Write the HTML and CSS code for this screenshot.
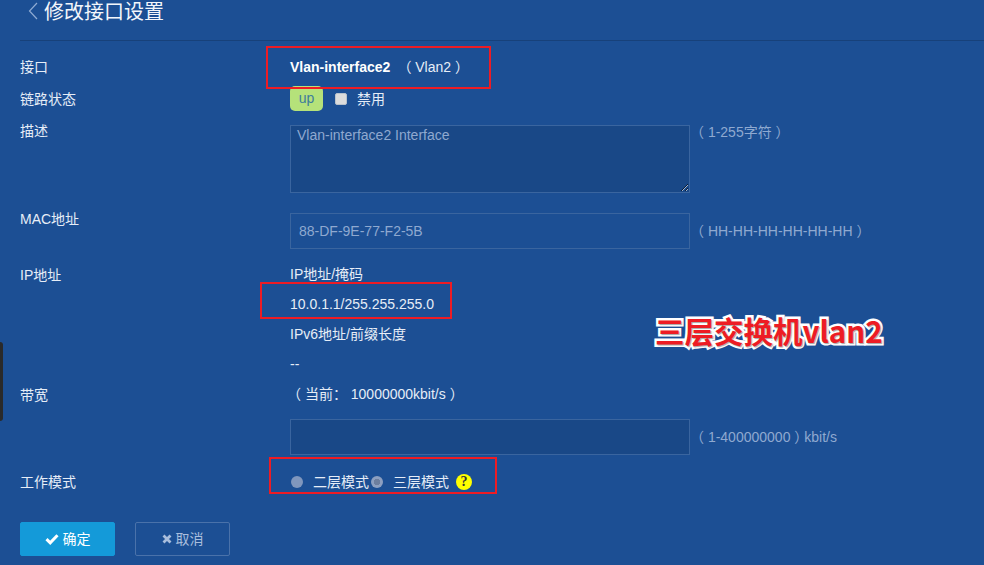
FILE: index.html
```html
<!DOCTYPE html>
<html lang="zh">
<head>
<meta charset="utf-8">
<title>修改接口设置</title>
<link rel="stylesheet" href="styles.css">
</head>
<body>
<div class="side-tab"></div>
<header class="head">
  <svg class="back" width="10" height="18" viewBox="0 0 10 18"><path d="M9 1 1.5 9 9 17" fill="none" stroke="#8fabd3" stroke-width="1.2"/></svg>
  <h1 class="title">修改接口设置</h1>
</header>
<main class="form">
  <div class="row row-iface">
    <div class="label">接口</div>
    <div class="value"><b class="iface-name">Vlan-interface2</b><span class="iface-alias">（ Vlan2 ）</span></div>
  </div>
  <div class="row row-link">
    <div class="label">链路状态</div>
    <div class="value link-value">
      <span class="badge">up</span>
      <span class="check"></span>
      <span class="check-text">禁用</span>
    </div>
  </div>
  <div class="row row-desc">
    <div class="label label-up">描述</div>
    <textarea class="field area" readonly>Vlan-interface2 Interface</textarea>
    <div class="hint hint-top">（ 1-255字符 ）</div>
  </div>
  <div class="row row-mac">
    <div class="label label-up">MAC地址</div>
    <input class="field line field-clear" value="88-DF-9E-77-F2-5B" readonly>
    <div class="hint">（ HH-HH-HH-HH-HH-HH ）</div>
  </div>
  <div class="row row-ip">
    <div class="label label-down">IP地址</div>
    <div class="stack">
      <div class="stack-line">IP地址/掩码</div>
      <div class="stack-line">10.0.1.1/255.255.255.0</div>
      <div class="stack-line">IPv6地址/前缀长度</div>
      <div class="stack-line">--</div>
    </div>
  </div>
  <div class="row row-band">
    <div class="label label-down">带宽</div>
    <div class="stack">
      <div class="stack-line current">（ 当前： 10000000kbit/s ）</div>
      <div class="band-input">
        <input class="field line" readonly>
        <div class="hint">（ 1-400000000 ）<span class="unit">kbit/s</span></div>
      </div>
    </div>
  </div>
  <div class="row row-mode">
    <div class="label">工作模式</div>
    <div class="value mode-value">
      <span class="radio"></span><span class="radio-text">二层模式</span>
      <span class="radio radio-on"></span><span class="radio-text">三层模式</span>
      <span class="help">?</span>
    </div>
  </div>
  <div class="actions">
    <button class="btn btn-primary" type="button">
      <svg width="14" height="12" viewBox="0 0 14 12"><path d="M1.5 6.2 5.2 9.8 12.5 2.2" fill="none" stroke="#fff" stroke-width="3"/></svg>确定
    </button>
    <button class="btn btn-ghost" type="button">
      <svg width="10" height="10" viewBox="0 0 10 10"><path d="M1.5 1.5 8.5 8.5M8.5 1.5 1.5 8.5" fill="none" stroke="#a9bedd" stroke-width="2.8"/></svg>取消
    </button>
  </div>
</main>
<div class="mark mark-iface"></div>
<div class="mark mark-ip"></div>
<div class="mark mark-mode"></div>
<div class="note">三层交换机vlan2</div>
</body>
</html>
```
FILE: styles.css
```css
* { box-sizing: border-box; }
html, body { height: 100%; }
body {
  margin: 0;
  overflow: hidden;
  position: relative;
  background: #1c4f94;
  color: #e6edf7;
  font: 14px/20px "Liberation Sans", "Noto Sans CJK SC", sans-serif;
}
.side-tab {
  position: absolute; left: 0; top: 342px;
  width: 3px; height: 79px;
  background: #2a2a2a;
  border-radius: 0 3px 3px 0;
}
.head {
  height: 41px;
  margin-left: 20px;
  padding: 1px 0 0 8px;
  display: flex;
  align-items: flex-start;
  border-bottom: 1px solid #17417a;
}
.back { margin-top: 1px; }
.title {
  margin: -2px 0 0 6px;
  font-size: 20px;
  line-height: 26px;
  font-weight: 400;
  color: #f2f6fb;
}
.form { padding-left: 20px; }
.row { display: flex; align-items: flex-start; }
.label { width: 270px; flex: none; }
.label-up { margin-top: -4px; }
.label-down { padding-top: 7px; }
.value { display: flex; align-items: center; }
.row-iface { margin-top: 16px; height: 20px; }
.iface-name { color: #fff; }
.iface-alias { margin-left: 7px; }
.row-link { margin-top: 9px; height: 25px; align-items: center; }
.link-value { height: 25px; }
.badge {
  width: 33px; height: 25px;
  background: #b5e27a;
  border-radius: 5px;
  color: #3d7d9c;
  font-size: 14px;
  line-height: 25px;
  text-align: center;
}
.check {
  width: 12px; height: 12px;
  margin-left: 12px;
  background: #dcdcdc;
  border: 1px solid #b9c2cc;
  border-radius: 2px;
}
.check-text { margin-left: 10px; }
.row-desc { margin-top: 14px; height: 68px; }
.row-mac { margin-top: 20px; height: 36px; }
.field {
  width: 400px;
  flex: none;
  background: #194887;
  border: 1px solid #3a659f;
  color: #8fa9d0;
  font: 14px/18px "Liberation Sans", "Noto Sans CJK SC", sans-serif;
  outline: none;
}
.field-clear { background: #1c4f94; }
.area { height: 68px; padding: 0 6px; margin: 0; display: block; }
.line { height: 36px; padding: 0 8px; margin: 0; display: block; }
.hint { color: #8fa9d0; line-height: 36px; white-space: nowrap; }
.hint-top { line-height: 14px; }
.unit { margin-left: -4px; }
.row-ip { margin-top: 9px; }
.row-band { height: 77px; }
.stack-line { height: 30px; line-height: 32px; }
.current { margin-left: -3px; }
.band-input { display: flex; margin-top: 11px; }
.current + .band-input { margin-left: 0; }
.row-mode { margin-top: 16px; height: 20px; }
.row-mode .label { padding-top: 1px; }
.mode-value { height: 20px; }
.radio {
  width: 12px; height: 12px;
  margin: 2px 0 0 1px;
  border-radius: 50%;
  background: #8097bd;
  flex: none;
}
.radio-on { background: radial-gradient(circle, #6c7e9e 0 3px, #8c9fc0 3.5px); margin-left: 2px; }
.radio-text { margin: 1px 0 0 10px; width: 56px; white-space: nowrap; }
.help {
  width: 16px; height: 16px;
  margin: 1px 0 0 7px;
  border-radius: 50%;
  background: #ffff00;
  color: #333;
  font: 700 14px/16px "Liberation Serif", serif;
  text-align: center;
}
.actions { display: flex; gap: 20px; margin-top: 31px; }
.btn {
  width: 95px; height: 34px;
  padding: 0;
  display: flex;
  align-items: center;
  justify-content: center;
  gap: 4px;
  border-radius: 2px;
  font: 14px/20px "Liberation Sans", "Noto Sans CJK SC", sans-serif;
}
.btn-primary { background: #149ad9; border: 1px solid #149ad9; color: #fff; }
.btn-ghost { background: transparent; border: 1px solid #4a72aa; color: #a9bedd; }
.mark { position: absolute; border: 2px solid #ed1c24; }
.mark-iface { left: 266px; top: 46px; width: 225px; height: 43px; }
.mark-ip { left: 260px; top: 282px; width: 192px; height: 37px; }
.mark-mode { left: 269px; top: 457px; width: 228px; height: 37px; }
.note {
  position: absolute; left: 655px; top: 310px;
  font: 700 29.5px/40px "Noto Sans CJK SC", sans-serif;
  color: #ed1c24;
  -webkit-text-stroke: 5px #fff;
  paint-order: stroke fill;
  text-shadow: 1px 1px 1px rgba(0, 0, 0, .35);
  white-space: nowrap;
}
```
